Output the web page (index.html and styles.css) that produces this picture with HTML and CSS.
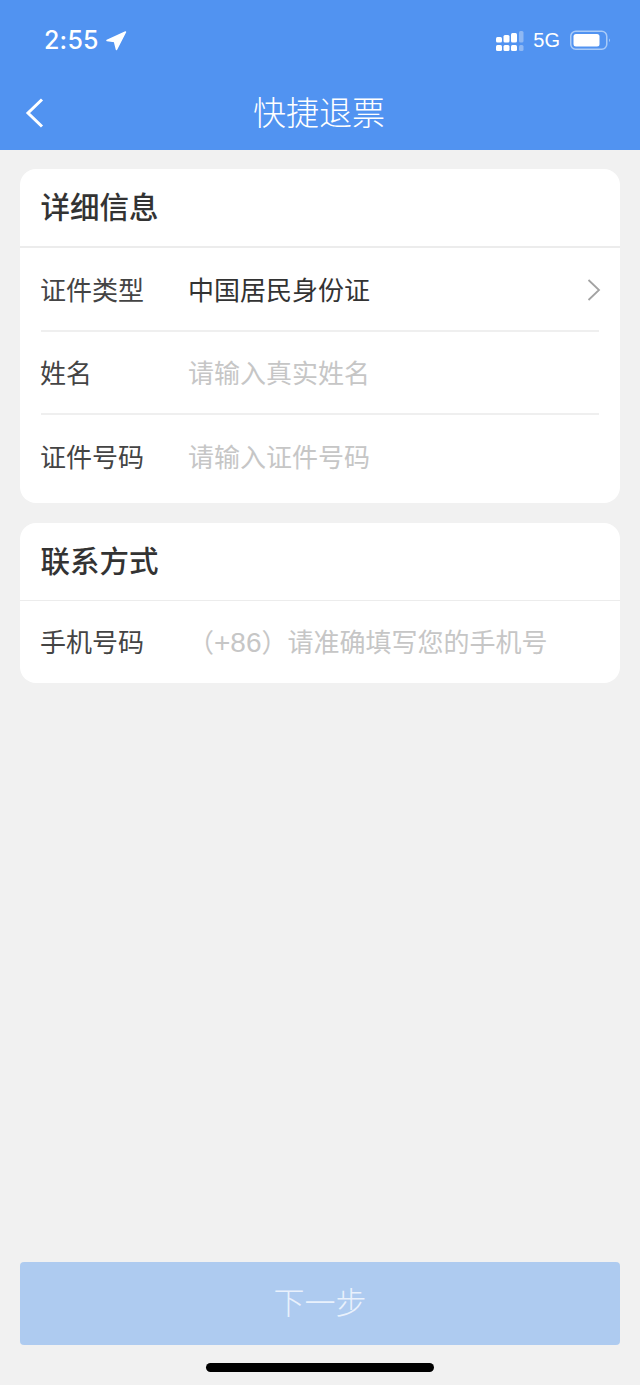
FILE: index.html
```html
<!DOCTYPE html>
<html lang="zh-CN">
<head>
<meta charset="utf-8">
<title>快捷退票</title>
<link rel="stylesheet" href="styles.css">
</head>
<body>
<div class="page">
  <header class="head">
    <div class="status">
      <div class="status-left">
        <span class="time">2:55</span>
        <svg class="loc" width="22" height="22" viewBox="0 0 22 22"><path d="M2 11.500 20.500 3 11.500 20.500 9.500 12.500Z" fill="#fff" stroke="#fff" stroke-width="1.500" stroke-linejoin="round"/></svg>
      </div>
      <div class="status-right">
        <svg class="signal" width="28" height="21" viewBox="0 0 28 21">
          <g fill="#fff">
            <rect x="0" y="7" width="6" height="5.500" rx="1.500"/><rect x="0" y="15" width="6" height="6" rx="1.500"/>
            <rect x="7.500" y="5" width="6" height="7.500" rx="1.500"/><rect x="7.500" y="15" width="6" height="6" rx="1.500"/>
            <rect x="15" y="3" width="6" height="9.500" rx="1.500"/><rect x="15" y="15" width="6" height="6" rx="1.500"/>
          </g>
          <g fill="#8fb8f3"><rect x="23" y="1" width="4.500" height="11.500" rx="1.500"/><rect x="23" y="15" width="4.500" height="6" rx="1.500"/></g>
        </svg>
        <span class="net">5G</span>
        <svg class="batt" width="41" height="21" viewBox="0 0 41 21">
          <rect x="0.750" y="1.250" width="36" height="18" rx="5" fill="none" stroke="#a9cbf8" stroke-width="1.500"/>
          <rect x="3.500" y="4" width="26" height="12.500" rx="2.500" fill="#fff"/>
          <path d="M39 8.500c1.300.4 1.300 3.100 0 3.500z" fill="#a9cbf8"/>
        </svg>
      </div>
    </div>
    <div class="nav">
      <svg class="back" width="20" height="30" viewBox="0 0 20 30"><path d="M18 1.500 4 15l14 13.500" fill="none" stroke="#fff" stroke-width="3"/></svg>
      <h1 class="nav-title">快捷退票</h1>
    </div>
  </header>

  <main class="content">
    <section class="card">
      <h2 class="card-title">详细信息</h2>
      <div class="row row-type">
        <span class="label">证件类型</span>
        <span class="value">中国居民身份证</span>
        <svg class="chev" width="14" height="22" viewBox="0 0 14 22"><path d="M1.500 1 12 11 1.500 21" fill="none" stroke="#a3a3a3" stroke-width="1.800"/></svg>
      </div>
      <div class="row row-name">
        <span class="label">姓名</span>
        <span class="hint">请输入真实姓名</span>
      </div>
      <div class="row row-last">
        <span class="label">证件号码</span>
        <span class="hint">请输入证件号码</span>
      </div>
    </section>

    <section class="card">
      <h2 class="card-title card-title-thin">联系方式</h2>
      <div class="row row-phone">
        <span class="label">手机号码</span>
        <span class="hint hint-phone">（<span class="code">+86</span>）请准确填写您的手机号</span>
      </div>
    </section>
  </main>

  <footer class="foot">
    <div class="next">下一步</div>
    <div class="home-bar"></div>
  </footer>
</div>
</body>
</html>
```
FILE: styles.css
```css
* { box-sizing: border-box; margin: 0; padding: 0; }
html, body { height: 100%; }
body {
  background: #f1f1f1;
  font-family: "Noto Sans CJK SC", "Liberation Sans", sans-serif;
  color: #333;
}
.page {
  height: 1385px;
  display: flex;
  flex-direction: column;
  overflow: hidden;
}
.head {
  height: 150px;
  background: #5193f1;
  color: #fff;
  flex: none;
}
.status {
  height: 78px;
  display: flex;
  justify-content: space-between;
  padding: 26px 29px 0 44px;
}
.status-left, .status-right {
  height: 28px;
  display: flex;
  align-items: center;
}
.time {
  font-family: "Inter", "Liberation Sans", sans-serif;
  font-size: 25px;
  font-weight: 500;
  letter-spacing: 0.2px;
}
.loc { margin-left: 6px; }
.signal { margin-right: 9px; }
.net {
  font-family: "Liberation Sans", sans-serif;
  font-size: 20px;
  margin-right: 10px;
}
.nav {
  height: 72px;
  position: relative;
  display: flex;
  align-items: center;
  justify-content: center;
  padding: 0 2px 6px 0;
}
.back { position: absolute; left: 24px; top: 20px; }
.nav-title {
  font-size: 33px;
  font-weight: 300;
  line-height: 60px;
}
.content {
  padding: 19px 20px 0;
  display: flex;
  flex-direction: column;
  gap: 20px;
  flex: 1;
}
.card {
  background: #fff;
  border-radius: 16px;
  overflow: hidden;
}
.card-title {
  height: 79px;
  padding-left: 20.500px;
  font-size: 29.500px;
  font-weight: 500;
  line-height: 72px;
  color: #333;
  border-bottom: 2px solid #ececec;
}
.card-title-thin { height: 78px; border-bottom-width: 1px; }
.row {
  margin: 0 21px;
  display: flex;
  align-items: center;
  border-bottom: 2px solid #efefef;
  font-size: 26px;
  font-weight: 400;
}
.row-type { height: 84px; padding-bottom: 2px; }
.row-name { height: 83px; padding-bottom: 3px; }
.row-last { height: 88px; padding-bottom: 8px; border-bottom: 0; }
.row-phone { height: 82px; padding-bottom: 3px; border-bottom: 0; }
.label {
  width: 148px;
  margin-left: -1px;
  flex: none;
  color: #444;
}
.value { color: #333; flex: 1; }
.hint { color: #c6c6c6; }
.code { font-family: "Liberation Sans", sans-serif; font-size: 28px; }
.chev { flex: none; margin: 3px -2px 0 0; }
.foot {
  flex: none;
  height: 123px;
  padding: 0 20px;
  display: flex;
  flex-direction: column;
  align-items: center;
}
.next {
  width: 100%;
  height: 83px;
  background: #aecbf0;
  border-radius: 4px;
  color: #e9f1fc;
  font-size: 31px;
  font-weight: 300;
  text-align: center;
  line-height: 78px;
}
.home-bar {
  width: 228px;
  height: 9px;
  margin-top: 18px;
  background: #000;
  border-radius: 5px;
}
```
